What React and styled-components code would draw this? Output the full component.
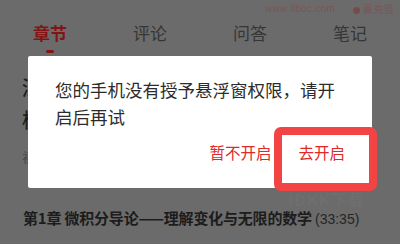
import React from "react";
import styled, { createGlobalStyle } from "styled-components";

const GlobalStyle = createGlobalStyle`
	html, body {
		margin: 0;
		padding: 0;
		width: 400px;
		height: 244px;
		overflow: hidden;
		background: #6b6b6b;
		font-family: "Noto Sans CJK SC", "Noto Sans", sans-serif;
	}
`;

const Screen = styled.div`
	position: relative;
	width: 400px;
	height: 244px;
	overflow: hidden;
	background: #6b6b6b;
`;

const TopStrip = styled.div`
	height: 16px;
	display: flex;
	justify-content: flex-end;
	align-items: center;
	gap: 18px;
	padding-right: 6px;
	font-family: "Liberation Sans", "Noto Sans CJK SC", sans-serif;
	font-size: 10px;
	color: #7a5656;
	letter-spacing: 0.3px;
`;

const Dot = styled.span`
	display: inline-block;
	width: 7px;
	height: 7px;
	border-radius: 50%;
	background: #7a4a4a;
	margin-right: 3px;
	vertical-align: -1px;
`;

const Tabs = styled.nav`
	display: grid;
	grid-template-columns: repeat(4, 1fr);
	height: 40px;
`;

const Tab = styled.div`
	display: flex;
	flex-direction: column;
	align-items: center;
	padding-top: 5px;
	font-size: 17px;
	line-height: 24px;
	color: ${(p) => (p.active ? "#821414" : "#363636")};
	font-weight: ${(p) => (p.active ? 700 : 400)};
`;

const Underline = styled.span`
	width: 8px;
	height: 3px;
	border-radius: 2px;
	background: #821414;
	margin-top: 5px;
`;

const Content = styled.div`
	padding: 0 22px;
`;

const CourseTitle = styled.h1`
	margin: 16px 0 0;
	font-size: 20px;
	line-height: 32px;
	font-weight: 500;
	color: #1e1e1e;
	span {
		display: block;
	}
`;

const Meta = styled.div`
	margin-top: 11px;
	font-size: 13px;
	line-height: 20px;
	color: #4a4a4a;
`;

const Chapter = styled.div`
	margin-top: 39px;
	font-size: 15px;
	line-height: 24px;
	font-weight: 700;
	letter-spacing: -0.2px;
	color: #1c1c1c;
	white-space: nowrap;
	margin-left: 1px;
`;

const Duration = styled.span`
	font-family: "Liberation Sans", "Noto Sans", sans-serif;
	font-weight: 400;
	letter-spacing: 0;
	color: #262626;
	font-size: 14px;
`;

const Backdrop = styled.div`
	position: absolute;
	inset: 0;
	display: flex;
	align-items: center;
	justify-content: center;
`;

const Dialog = styled.div`
	position: relative;
	width: 344px;
	height: 132px;
	box-sizing: border-box;
	background: #ffffff;
	border-radius: 2px;
	padding: 20px 27px 0;
	display: flex;
	flex-direction: column;
`;

const Message = styled.p`
	margin: 0;
	font-size: 17.5px;
	line-height: 27px;
	color: #2c2c2c;
`;

const Actions = styled.div`
	display: flex;
	justify-content: flex-end;
	gap: 3px;
	margin: 2px -12px 0 0;
`;

const ActionButton = styled.button`
	height: 40px;
	padding: 0 12px;
	border: none;
	background: transparent;
	font-family: "Noto Sans CJK SC", "Noto Sans", sans-serif;
	font-size: 15.5px;
	color: #e02a2a;
`;

const Highlight = styled.div`
	position: absolute;
	left: 246px;
	top: 71px;
	width: 103px;
	height: 64px;
	box-sizing: border-box;
	border: 8px solid #f24444;
	border-radius: 7px;
	pointer-events: none;
`;

const Watermark = styled.div`
	position: absolute;
	left: 288px;
	top: 191px;
	font-size: 16px;
	line-height: 16px;
	font-weight: 700;
	letter-spacing: 1px;
	color: rgba(255, 255, 255, 0.035);
`;

export default function App() {
	return (
		<>
			<GlobalStyle />
			<Screen>
				<TopStrip>
					<span>www.liboc.com</span>
					<span>
						<Dot />
						赢充值
					</span>
				</TopStrip>
				<Tabs>
					<Tab active>
						章节
						<Underline />
					</Tab>
					<Tab>评论</Tab>
					<Tab>问答</Tab>
					<Tab>笔记</Tab>
				</Tabs>
				<Content>
					<CourseTitle>
						<span>深入浅出学习微积分</span>
						<span>极限、导数与积分的奥秘</span>
					</CourseTitle>
					<Meta>初级 · 共12章 · 3.2万人学习</Meta>
					<Chapter>
						第1章 微积分导论——理解变化与无限的数学 <Duration>(33:35)</Duration>
					</Chapter>
				</Content>
				<Watermark>IDKK下载</Watermark>
				<Backdrop>
					<Dialog>
						<Message>您的手机没有授予悬浮窗权限，请开启后再试</Message>
						<Actions>
							<ActionButton>暂不开启</ActionButton>
							<ActionButton>去开启</ActionButton>
						</Actions>
						<Highlight />
					</Dialog>
				</Backdrop>
			</Screen>
		</>
	);
}
